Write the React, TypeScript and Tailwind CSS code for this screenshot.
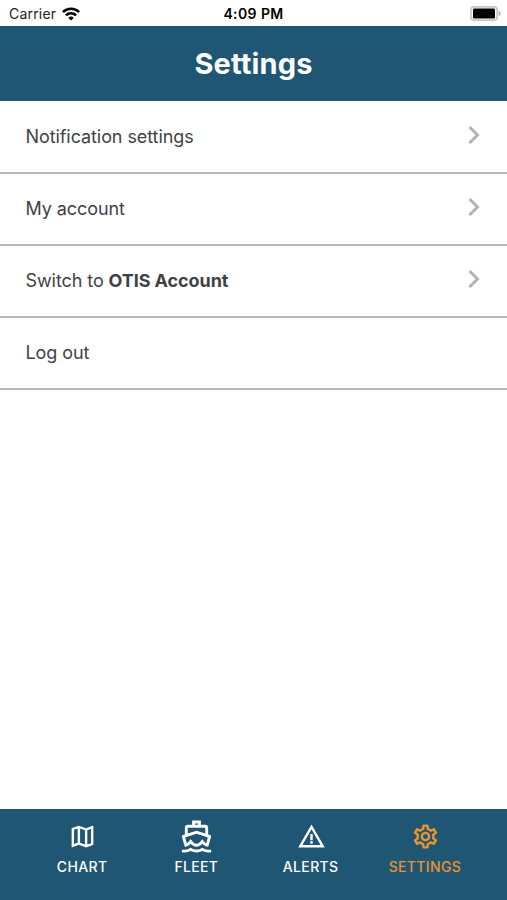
import type { ReactNode } from "react";
import { MdOutlineDirectionsBoat, MdOutlineMap, MdOutlineSettings, MdWarningAmber } from "react-icons/md";

const rows: { id: string; label: ReactNode; arrow: boolean }[] = [
  { id: "notifications", label: "Notification settings", arrow: true },
  { id: "account", label: "My account", arrow: true },
  {
    id: "switch",
    label: (
      <>
        Switch to <span className="font-bold">OTIS Account</span>
      </>
    ),
    arrow: true,
  },
  { id: "logout", label: "Log out", arrow: false },
];

const tabs = [
  { label: "CHART", icon: <MdOutlineMap className="w-[29px] h-[29px]" />, active: false },
  { label: "FLEET", icon: <MdOutlineDirectionsBoat className="w-[35px] h-[35px]" />, active: false },
  { label: "ALERTS", icon: <MdWarningAmber className="w-[29px] h-[29px]" />, active: false },
  { label: "SETTINGS", icon: <MdOutlineSettings className="w-[29px] h-[29px]" />, active: true },
];

function WifiIcon() {
  return (
    <svg viewBox="0 0 18 14" className="w-[18px] h-[14px]" fill="none" stroke="#000" strokeWidth="2.6">
      <path d="M0.9 5.1a11.6 11.6 0 0 1 16.2 0" />
      <path d="M3.9 8.4a7.3 7.3 0 0 1 10.2 0" />
      <path d="M9 13.6 6.3 10.9a3.9 3.9 0 0 1 5.4 0Z" fill="#000" stroke="none" />
    </svg>
  );
}

function BatteryIcon() {
  return (
    <svg viewBox="0 0 31 15" className="w-[31px] h-[15px]">
      <rect x="0.9" y="0.9" width="26.2" height="13.2" rx="3.2" fill="#fff" stroke="#c6c6c6" strokeWidth="1.7" />
      <rect x="3" y="2.6" width="22" height="9.8" rx="1.2" fill="#000" />
      <path d="M28.6 4.8c1.4.5 2.2 1.5 2.2 2.7s-.8 2.2-2.2 2.7Z" fill="#b5b5b5" />
    </svg>
  );
}

function StatusBar() {
  return (
    <div className="flex items-center justify-between h-[25.5px] pt-[2px] pl-[9px] pr-[6px] text-black">
      <div className="flex flex-1 items-center gap-[6px] text-[14px] text-[#222]">
        <span className="tracking-[0.2px]">Carrier</span>
        <WifiIcon />
      </div>
      <span className="pr-[3px] text-[14px] font-semibold tracking-[0.4px]">4:09 PM</span>
      <div className="flex flex-1 justify-end">
        <BatteryIcon />
      </div>
    </div>
  );
}

function App() {
  return (
    <div className="flex flex-col h-[900px] w-[507px] overflow-hidden bg-white font-['Inter','Liberation_Sans',sans-serif]">
      <StatusBar />

      <header className="flex items-center justify-center h-[75px] pt-px bg-[#1f5673]">
        <h1 className="text-[29px] font-bold tracking-[0.15px] text-white">Settings</h1>
      </header>

      <main className="flex-1 pt-px">
        {rows.map(({ id, label, arrow }) => (
          <button
            key={id}
            type="button"
            className="flex items-center justify-between w-full h-[72px] pl-[25.5px] pr-[27px] border-b-2 border-[#b4b6b8] text-[18px] tracking-[-0.08px] text-[#3f4245]"
          >
            <span>{label}</span>
            {arrow && (
              <svg
                viewBox="0 0 13 20"
                className="w-[13px] h-5 mb-[3px]"
                fill="none"
                stroke="#b2b2b2"
                strokeWidth="3"
              >
                <path d="m2.5 2 8 8-8 8" />
              </svg>
            )}
          </button>
        ))}
      </main>

      <nav className="grid grid-cols-4 h-[91px] px-[25px] bg-[#1f5673]">
        {tabs.map(({ label, icon, active }) => (
          <button
            key={label}
            type="button"
            className={`flex flex-col items-center pt-[10px] ${active ? "text-[#e8942f]" : "text-white"}`}
          >
            <span className="flex items-center justify-center h-[35px] pl-px">{icon}</span>
            <span className="mt-[3px] text-[14px] font-medium leading-5 tracking-[0.35px]">{label}</span>
          </button>
        ))}
      </nav>
    </div>
  );
}

export default App;
